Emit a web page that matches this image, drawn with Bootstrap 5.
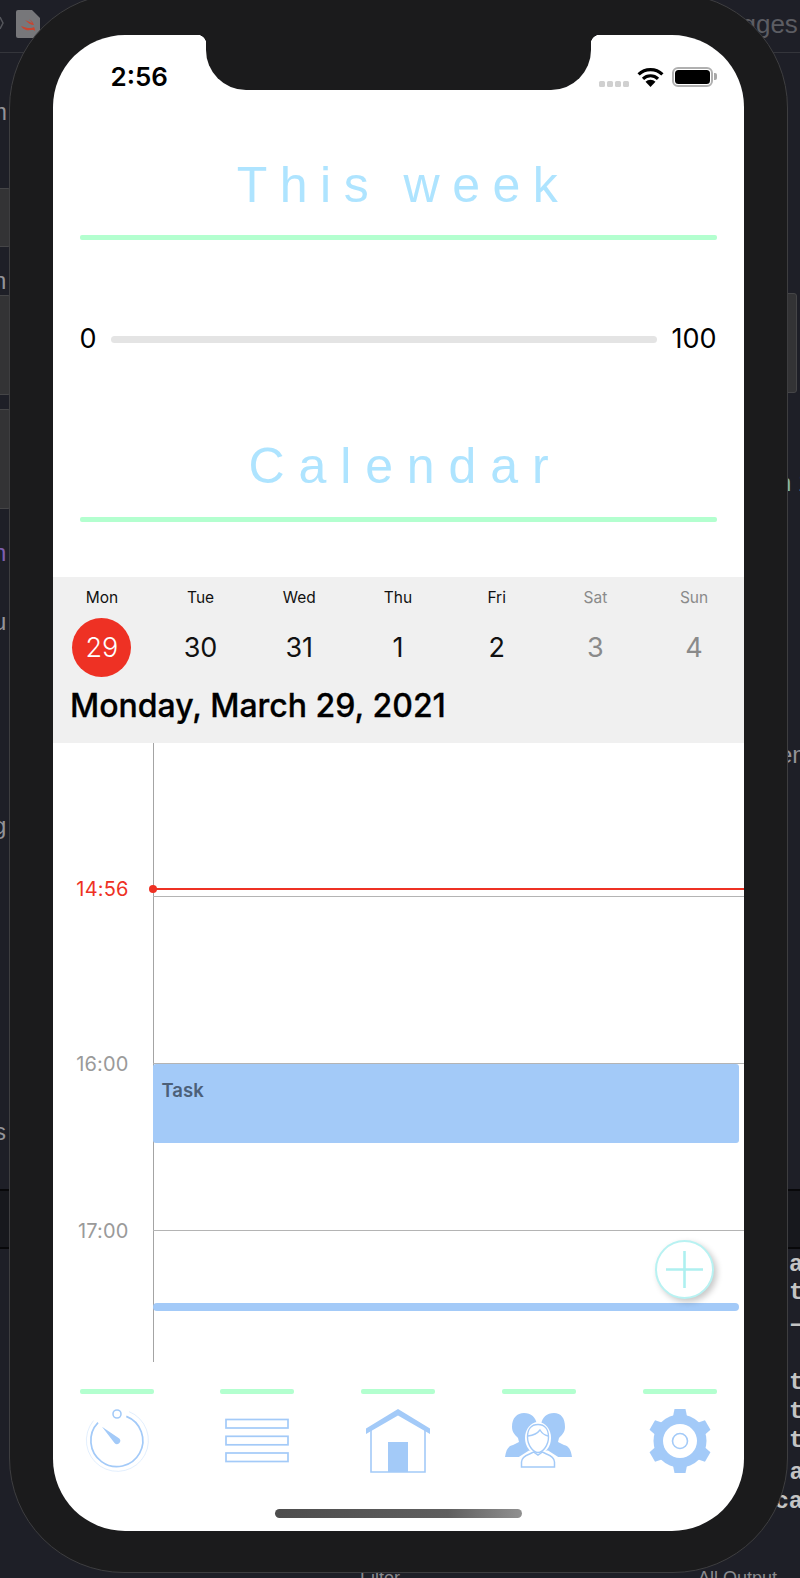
<!DOCTYPE html>
<html lang="en">
<head>
    <meta charset="UTF-8">
    <meta name="viewport" content="width=device-width, initial-scale=1.0">
    <title>Planner</title>
    <link href="https://cdn.jsdelivr.net/npm/bootstrap@5.3.0/dist/css/bootstrap.min.css" rel="stylesheet">
    <style>
        html, body { height: 1578px; overflow: hidden; }
        body { background: #1e1f27; font-family: Inter, "Liberation Sans", sans-serif; position: relative; width: 800px; }

        /* editor window behind the phone */
        .ide-bit { position: absolute; font-family: "Liberation Mono", monospace; font-weight: 700; font-size: 24px; line-height: 24px; color: #c4c4c4; white-space: nowrap; }
        .ide-sans { font-family: "Liberation Sans", sans-serif; font-weight: 400; color: #939399; }
        .ide-dim { color: #5c5d63; font-size: 26px; }
        .ide-foot { color: #8a8a8e; font-size: 18px; }
        .ide-tab { position: absolute; width: 40px; background: #333335; border: 1px solid #454547; border-radius: 3px; }
        .ide-rule { position: absolute; left: 0; right: 0; height: 1px; background: #34353b; }
        .ide-black { position: absolute; left: 0; right: 0; height: 2px; background: #08080a; }
        .ide-band { position: absolute; left: 0; right: 0; top: 1190px; height: 58px; background: #17181d; }

        .phone { position: absolute; left: 9px; top: -7px; width: 779px; height: 1580px; background: #1b1b1c; border: 1.5px solid #3e3e40; border-radius: 115px; padding: 40.5px 0 0 42.5px; }
        .screen { position: relative; width: 691px; height: 1496px; background: #fff; border-radius: 72px; overflow: hidden; }
        .notch { position: absolute; top: 0; left: 153px; width: 385px; height: 55px; background: #1b1b1c; border-radius: 0 0 40px 40px; z-index: 5; }
        .notch::before, .notch::after { content: ""; position: absolute; top: 0; width: 9px; height: 9px; }
        .notch::before { left: -9px; background: radial-gradient(circle at 0 100%, transparent 9px, #1b1b1c 9.5px); }
        .notch::after { right: -9px; background: radial-gradient(circle at 100% 100%, transparent 9px, #1b1b1c 9.5px); }

        .status-row { height: 84px; padding: 0 27px 0 58px; }
        .clock { font-size: 26px; font-weight: 600; color: #000; line-height: 1; width: 100px; }
        .sig-dot { width: 6px; height: 6px; border-radius: 1.5px; background: #d0d0d0; }
        .sig-dots { margin-top: 14px; gap: 2px; margin-right: 8px; }
        .batt { width: 41px; height: 20px; border: 2px solid #b0b0b0; border-radius: 6px; padding: 1px; margin-left: 8px; }
        .batt-fill { background: #000; border-radius: 3.5px; height: 100%; }
        .batt-nub { width: 3px; height: 7px; background: #a8a8a8; border-radius: 0 2px 2px 0; margin-left: 1px; }

        .sec-title { font-family: "Liberation Sans", sans-serif; font-size: 50px; line-height: 60px; height: 60px; color: #aee4ff; text-align: center; white-space: nowrap; }
        .title-week { margin-top: 36px; letter-spacing: 12.5px; word-spacing: -4px; padding-left: 11px; }
        .title-cal { margin-top: 66px; letter-spacing: 13.9px; padding-left: 15px; }
        .green-rule { height: 5px; margin: 0 27px; background: #b3ffcf; border-radius: 2px; }
        .goal-row { height: 60px; margin: 70px 27px 0; gap: 14px; font-size: 27px; color: #000; }
        .goal-track { height: 7px; background: #e4e4e4; border-radius: 4px; }

        .week-band { height: 166px; background: #f0f0f0; margin-top: 55px; padding-top: 11px; }
        .day-col { width: 14.2857%; text-align: center; }
        .day-name { font-size: 15.5px; line-height: 20px; color: #111; }
        .day-num { width: 59px; height: 59px; padding-top: 2px; font-size: 27px; margin: 10px auto 0; color: #111; }
        .day-off { color: #8a8a8a; }
        .day-today { background: #ee3124; color: #fff; border-radius: 50%; font-weight: 300; }
        .date-head { font-size: 32px; font-weight: 500; line-height: 40px; color: #000; margin: 9px 0 0 17.5px; white-space: nowrap; -webkit-text-stroke: .3px #000; }

        .day-view { position: relative; height: 619px; }
        .hour-gap { height: 153.5px; }
        .hour-row { position: relative; height: 167px; margin-left: 100px; border-top: 1px solid #b4b4b4; }
        .hour-last { height: 131px; }
        .hour-tag { position: absolute; right: 100%; margin-right: 24px; top: -13px; line-height: 26px; font-size: 20px; letter-spacing: .15px; color: #9a9a9a; }
        .axis { position: absolute; left: 100px; top: 0; bottom: 0; width: 1px; background: #a4a4a4; }
        .now-line { position: absolute; left: 100px; right: 0; top: 145.5px; height: 1.5px; background: #ee3124; }
        .now-line::before { content: ""; position: absolute; left: -4px; top: -3px; width: 8px; height: 8px; background: #ee3124; border-radius: 50%; }
        .now-tag { position: absolute; right: 100%; margin-right: 24px; top: -12px; line-height: 26px; font-size: 20px; letter-spacing: .15px; color: #ee3124; }
        .task-block { position: absolute; left: 0; right: 5px; top: 0; height: 79px; background: #a3caf8; border-radius: 3px; padding: 12px 9px; font-size: 18.5px; font-weight: 600; line-height: 28px; color: #4c6079; }
        .task-stub { position: absolute; left: 0; right: 5px; top: 72px; height: 8px; background: #a3caf8; border-radius: 4px; }
        .add-fab { position: absolute; top: 9px; right: 30px; width: 59px; height: 59px; padding: 0; background: #fff; border: 2px solid #b8f2f2; border-radius: 50%; box-shadow: 3px 3px 6px rgba(0,0,0,.22); }

        .tab-bar { margin: 27px 27px 0; }
        .tab-item { width: 74px; }
        .tab-mark { height: 5px; background: #b3ffcf; border-radius: 2px; }
        .tab-icon { height: 64px; margin-top: 15px; }
        .tab-icon svg { display: block; overflow: visible; }
        .home-bar { width: 247px; height: 9px; margin: 36px auto 0; border-radius: 5px; background: linear-gradient(90deg, #4d4d4d, #5f5f5f 70%, #909090); }
    </style>
</head>
<body>

<!-- Bits of the editor showing behind the simulator -->
<div class="ide-rule" style="top: 52px"></div>
<div class="ide-band"></div>
<div class="ide-black" style="top: 1189px"></div>
<div class="ide-black" style="top: 1247px"></div>
<svg class="position-absolute" style="left: 0; top: 8px" width="44" height="32" viewBox="0 0 44 32">
    <path d="M0 9l3 6-3 6" fill="none" stroke="#55565c" stroke-width="1.5"/>
    <path d="M16 4a2 2 0 0 1 2-2h14l8 8v18a2 2 0 0 1-2 2H18a2 2 0 0 1-2-2z" fill="#77777a"/>
    <path d="M21 18c5 2 10 3 13 1 1 2 1 3 1 4-1-2-6 0-9-1-2-1-4-2-5-4zM25 12c3 3 6 5 9 5-1-3-3-5-5-6 2 2 3 3 3 4-2-1-5-2-7-3z" fill="#c9452f"/>
</svg>
<div class="ide-tab" style="left: -29px; top: 188px; height: 59px"></div>
<div class="ide-tab" style="left: -29px; top: 295px; height: 100px"></div>
<div class="ide-tab" style="left: -29px; top: 409px; height: 100px"></div>
<div class="ide-tab" style="left: 757px; top: 293px; height: 100px"></div>
<div class="ide-bit ide-sans" style="left: -13px; top: 100px">m</div>
<div class="ide-bit ide-sans" style="left: -7px; top: 269px">n</div>
<div class="ide-bit ide-sans" style="left: -7px; top: 541px; color: #7d5fb0">n</div>
<div class="ide-bit ide-sans" style="left: -7px; top: 610px">u</div>
<div class="ide-bit ide-sans" style="left: -7px; top: 814px">g</div>
<div class="ide-bit ide-sans" style="left: -6px; top: 1120px">s</div>
<div class="ide-bit ide-sans ide-dim" style="left: 727px; top: 12px">ugges</div>
<div class="ide-bit ide-sans" style="left: 778px; top: 471px; color: #7fb5ab">n 1</div>
<div class="ide-bit ide-sans" style="left: 779px; top: 743px">em</div>
<div class="ide-bit" style="left: 789px; top: 1253px">a</div>
<div class="ide-bit" style="left: 789px; top: 1281px">t</div>
<div class="ide-bit" style="left: 789px; top: 1313px">–</div>
<div class="ide-bit" style="left: 789px; top: 1371px">t</div>
<div class="ide-bit" style="left: 789px; top: 1400px">t</div>
<div class="ide-bit" style="left: 789px; top: 1429px">t</div>
<div class="ide-bit" style="left: 775px; top: 1461px">.a</div>
<div class="ide-bit" style="left: 760px; top: 1490px">.ca</div>
<div class="ide-bit ide-sans ide-foot" style="left: 360px; top: 1566px">Filter</div>
<div class="ide-bit ide-sans ide-foot" style="left: 698px; top: 1566px">All Output</div>

<div class="phone">
    <div class="screen">
        <div class="notch"></div>

        <!-- Status bar -->
        <div class="status-row d-flex align-items-center justify-content-between">
            <div class="clock">2:56</div>
            <div class="d-flex align-items-center">
                <div class="sig-dots d-flex">
                    <div class="sig-dot"></div><div class="sig-dot"></div><div class="sig-dot"></div><div class="sig-dot"></div>
                </div>
                <svg width="27" height="20" viewBox="0 0 27 20">
                    <path d="M1.6 7.4a17 17 0 0 1 23.800 0M6 11.800a10.800 10.800 0 0 1 15 0" fill="none" stroke="#000" stroke-width="3.2"/>
                    <path d="M13.500 20l-5-5.200a7 7 0 0 1 10 0z" fill="#000"/>
                </svg>
                <div class="batt"><div class="batt-fill"></div></div>
                <div class="batt-nub"></div>
            </div>
        </div>

        <!-- This week -->
        <div class="sec-title title-week">This week</div>
        <div class="green-rule" style="margin-top: 20px"></div>
        <div class="goal-row d-flex align-items-center">
            <span>0</span>
            <div class="goal-track flex-grow-1"></div>
            <span>100</span>
        </div>

        <!-- Calendar -->
        <div class="sec-title title-cal">Calendar</div>
        <div class="green-rule" style="margin-top: 21px"></div>

        <div class="week-band">
            <div class="d-flex" id="weekDays"></div>
            <div class="date-head">Monday, March 29, 2021</div>
        </div>

        <!-- Day schedule -->
        <div class="day-view">
            <div class="axis"></div>
            <div class="hour-gap"></div>
            <div class="hour-row"></div>
            <div class="hour-row">
                <span class="hour-tag">16:00</span>
                <div class="task-block">Task</div>
            </div>
            <div class="hour-row hour-last">
                <span class="hour-tag">17:00</span>
                <div class="task-stub"></div>
                <button class="add-fab btn d-flex align-items-center justify-content-center" type="button" aria-label="Add">
                    <svg width="37" height="37" viewBox="0 0 37 37"><path d="M18.500 0v37M0 18.500h37" stroke="#aef0f0" stroke-width="2.600"/></svg>
                </button>
            </div>
            <div class="now-line"><span class="now-tag">14:56</span></div>
        </div>

        <!-- Tab bar -->
        <div class="tab-bar d-flex justify-content-between">
            <div class="tab-item">
                <div class="tab-mark"></div>
                <div class="tab-icon d-flex justify-content-center">
                    <svg width="64" height="64" viewBox="0 0 64 64" fill="none" stroke="#a3caf8">
                        <circle cx="32" cy="5" r="4" stroke-width="1.6"/>
                        <path d="M41.300 7.400A26 26 0 1 1 13 13.700" stroke-width="1.7"/>
                        <path d="M44 2.600A31 31 0 1 1 8.500 11.600" stroke-width="1" opacity=".3"/>
                        <path d="M17 17.700L29.500 34a3.200 3.200 0 0 0 4.800-4.500z" fill="#a3caf8" stroke="none"/>
                    </svg>
                </div>
            </div>
            <div class="tab-item">
                <div class="tab-mark"></div>
                <div class="tab-icon d-flex justify-content-center">
                    <svg width="64" height="64" viewBox="0 0 64 64" fill="none" stroke="#a3caf8" stroke-width="1.7">
                        <rect x="1" y="10.500" width="62" height="8.500"/>
                        <rect x="1" y="27.300" width="62" height="8.500"/>
                        <rect x="1" y="44" width="62" height="8.500"/>
                    </svg>
                </div>
            </div>
            <div class="tab-item">
                <div class="tab-mark"></div>
                <div class="tab-icon d-flex justify-content-center">
                    <svg width="64" height="64" viewBox="0 0 64 64" fill="#a3caf8">
                        <path d="M32 0L64 19.500V25L32 6.500 0 25V19.500z"/>
                        <path d="M5 21V63H59V21" fill="none" stroke="#a3caf8" stroke-width="1.6"/>
                        <rect x="22" y="33" width="20" height="30"/>
                    </svg>
                </div>
            </div>
            <div class="tab-item">
                <div class="tab-mark"></div>
                <div class="tab-icon d-flex justify-content-center">
                    <svg width="67" height="64" viewBox="0 0 67 64">
                        <g transform="translate(0 4)" fill="#a3caf8">
                            <path d="M7 14C7 5 12 0 19 0s12 4 13 12c0 5-1 9-3 12l-1 4 6 3v13H0c1-7 3-11 8-12l6-3-1-4c-3-3-6-6-6-11z"/>
                            <path d="M36 12C37 4 42 0 49 0s11 5 11 14c0 5-3 8-6 11l-1 4 6 3c5 1 7 5 8 12H34V31l6-3-1-4c-2-3-3-7-3-12z"/>
                            <ellipse cx="33" cy="25" rx="13" ry="16" fill="#fff"/>
                            <path d="M13 44.500h41l-11-7h-19z" fill="#fff"/>
                            <path d="M22.500 24c0-8 4-12.500 10.500-12.500s10.500 4.500 10.500 12.500c0 8-5.500 15.500-10.500 15.500s-10.500-7.500-10.500-15.500z" fill="#fff" stroke="#a3caf8" stroke-width="1.4"/>
                            <path d="M23 23c4-.5 9-2 12-6 1.500 2.500 4 5 8 6" fill="none" stroke="#a3caf8" stroke-width="1.4"/>
                            <path d="M16.500 54v-5c0-4 3-6 8-8l4-2 4.500 3 4.500-3 4 2c5 2 8 4 8 8v5z" fill="#fff" stroke="#a3caf8" stroke-width="1.5"/>
                        </g>
                    </svg>
                </div>
            </div>
            <div class="tab-item">
                <div class="tab-mark"></div>
                <div class="tab-icon d-flex justify-content-center">
                    <svg width="64" height="64" viewBox="0 0 64 64" fill="#a3caf8">
                        <circle cx="32" cy="32" r="26.500"/>
                        <g>
                            <path d="M26.500 0h11l2 10h-15z"/>
                            <path d="M26.500 0h11l2 10h-15z" transform="rotate(60 32 32)"/>
                            <path d="M26.500 0h11l2 10h-15z" transform="rotate(120 32 32)"/>
                            <path d="M26.500 0h11l2 10h-15z" transform="rotate(180 32 32)"/>
                            <path d="M26.500 0h11l2 10h-15z" transform="rotate(240 32 32)"/>
                            <path d="M26.500 0h11l2 10h-15z" transform="rotate(300 32 32)"/>
                        </g>
                        <circle cx="32" cy="32" r="17" fill="#fff"/>
                        <circle cx="32" cy="32" r="7.500" fill="#fff" stroke="#a3caf8" stroke-width="1.6"/>
                    </svg>
                </div>
            </div>
        </div>

        <div class="home-bar"></div>
    </div>
</div>

<script>
    // Week strip
    const days = [
        { name: 'Mon', num: 29, today: true },
        { name: 'Tue', num: 30 },
        { name: 'Wed', num: 31 },
        { name: 'Thu', num: 1 },
        { name: 'Fri', num: 2 },
        { name: 'Sat', num: 3, off: true },
        { name: 'Sun', num: 4, off: true }
    ];
    const weekDays = document.getElementById('weekDays');
    days.forEach(d => {
        const tone = d.off ? ' day-off' : '';
        const today = d.today ? ' day-today' : '';
        weekDays.innerHTML += `
            <div class="day-col">
                <div class="day-name${tone}">${d.name}</div>
                <div class="day-num d-flex align-items-center justify-content-center${tone}${today}">${d.num}</div>
            </div>
        `;
    });
</script>

</body>
</html>
